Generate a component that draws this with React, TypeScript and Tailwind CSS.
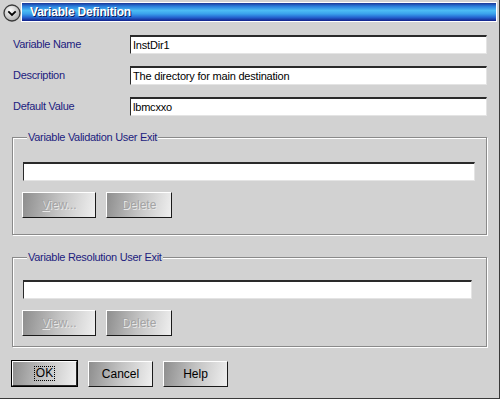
import React from "react";

const inputCls =
  "h-[19px] bg-white border-t-2 border-l border-r border-b border-t-[#2a2a2a] border-l-[#2a2a2a] border-r-[#e4e4e4] border-b-[#e4e4e4] px-[2px] flex items-center text-[11px] tracking-[-0.2px] text-black leading-none";

function DisabledButtons() {
  return (
    <div className="flex gap-[10px] mt-[11px] -ml-[1px]">
      <div className="w-[74px] h-[26px] border border-t-white border-l-white border-r-[#1a1a1a] border-b-[#1a1a1a] bg-[linear-gradient(100deg,#8e8e8e_0%,#c4c4c4_50%,#efefef_100%)] flex items-center justify-center text-[12px] text-[#a4a4a4] [text-shadow:1px_1px_0_#e8e8e8]">
        <span><span className="underline">V</span>iew...</span>
      </div>
      <div className="w-[66px] h-[26px] border border-t-white border-l-white border-r-[#1a1a1a] border-b-[#1a1a1a] bg-[linear-gradient(100deg,#8e8e8e_0%,#c4c4c4_50%,#efefef_100%)] flex items-center justify-center text-[12px] text-[#a4a4a4] [text-shadow:1px_1px_0_#e8e8e8]">
        Delete
      </div>
    </div>
  );
}

export default function App() {
  return (
    <div className="w-[500px] h-[399px] bg-[#d2d2d2] border-r border-b border-r-[#3a3a3a] border-b-[#3a3a3a] flex flex-col font-['Liberation_Sans',Arial,sans-serif] overflow-hidden">
      {/* title row */}
      <div className="flex items-start pl-[3px] pr-[2px] pt-[2px]">
        <svg width="18" height="18" viewBox="0 0 18 18" className="mt-[2px]">
          <defs>
            <radialGradient id="g" cx="40%" cy="35%" r="70%">
              <stop offset="0%" stopColor="#ffffff" />
              <stop offset="100%" stopColor="#a8a8a8" />
            </radialGradient>
          </defs>
          <circle cx="9" cy="9" r="8" fill="url(#g)" stroke="#3a3a3a" strokeWidth="1.3" />
          <polyline points="5.3,7.3 9,11 12.7,7.3" fill="none" stroke="#000" strokeWidth="1.8" />
        </svg>
        <div className="flex-1 h-[20px] border border-white bg-[linear-gradient(to_bottom,#1a3596_0%,#2a7ddc_18%,#4cbcf4_42%,#3aa2ec_60%,#2464d0_80%,#12208a_100%)] flex items-center pl-[8px]">
          <span className="text-white font-bold text-[12px] tracking-[-0.2px] leading-none [text-shadow:1px_1px_0_#0a1a60]">
            Variable Definition
          </span>
        </div>
      </div>

      {/* content */}
      <div className="flex flex-col px-[12px] pr-[12px]">
        <div className="flex flex-col gap-[12px] mt-[13px]">
          {[
            ["Variable Name", "InstDir1"],
            ["Description", "The directory for main destination"],
            ["Default Value", "lbmcxxo"],
          ].map(([l, v]) => (
            <div key={l} className="flex items-center">
              <div className="w-[118px] pl-[1px] text-[11px] tracking-[-0.3px] text-[#1c1c7e]">{l}</div>
              <div className={"flex-1 " + inputCls}>{v}</div>
            </div>
          ))}
        </div>

        <fieldset className="mt-[15px] border border-[#8a8a8a] shadow-[inset_1px_1px_0_#ffffff,1px_1px_0_#ffffff] pl-[10px] pr-[11px] pt-[18px] pb-[16px]">
          <legend className="ml-[4px] px-[1px] bg-[#d2d2d2] text-[11px] leading-[13px] tracking-[-0.3px] text-[#1c1c7e]">
            Variable Validation User Exit
          </legend>
          <div className={inputCls}></div>
          <DisabledButtons />
        </fieldset>

        <fieldset className="mt-[16px] border border-[#8a8a8a] shadow-[inset_1px_1px_0_#ffffff,1px_1px_0_#ffffff] pl-[10px] pr-[14px] pt-[16px] pb-[10px]">
          <legend className="ml-[4px] px-[1px] bg-[#d2d2d2] text-[11px] leading-[13px] tracking-[-0.3px] text-[#1c1c7e]">
            Variable Resolution User Exit
          </legend>
          <div className={inputCls}></div>
          <DisabledButtons />
        </fieldset>

        <div className="flex items-center gap-[10px] mt-[13px] -ml-[1px]">
          <div className="w-[67px] h-[27px] border border-black flex">
            <div className="flex-1 border border-t-white border-l-white border-r-[#2a2a2a] border-b-[#2a2a2a] bg-[linear-gradient(100deg,#8e8e8e_0%,#c4c4c4_50%,#efefef_100%)] flex items-center justify-center text-[12px] text-black">
              <span className="border border-dotted border-black px-[1px] leading-[13px]">OK</span>
            </div>
          </div>
          <div className="w-[65px] h-[26px] border border-t-white border-l-white border-r-[#1a1a1a] border-b-[#1a1a1a] bg-[linear-gradient(100deg,#8e8e8e_0%,#c4c4c4_50%,#efefef_100%)] flex items-center justify-center text-[12px] text-black">
            Cancel
          </div>
          <div className="w-[65px] h-[26px] border border-t-white border-l-white border-r-[#1a1a1a] border-b-[#1a1a1a] bg-[linear-gradient(100deg,#8e8e8e_0%,#c4c4c4_50%,#efefef_100%)] flex items-center justify-center text-[12px] text-black">
            Help
          </div>
        </div>
      </div>
    </div>
  );
}
